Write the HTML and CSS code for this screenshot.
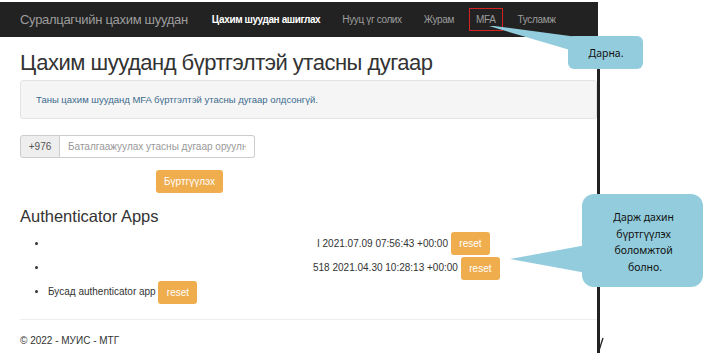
FILE: index.html
```html
<!DOCTYPE html>
<html lang="mn">
<head>
    <meta charset="UTF-8">
    <meta name="viewport" content="width=device-width, initial-scale=1.0">
    <title>MFA</title>
    <link rel="stylesheet" href="styles.css">
</head>
<body>
    <div class="navbar">
        <span class="brand">Суралцагчийн цахим шуудан</span>
        <a class="nav-link active">Цахим шуудан ашиглах</a>
        <a class="nav-link">Нууц үг солих</a>
        <a class="nav-link">Журам</a>
        <a class="nav-link marked">MFA</a>
        <a class="nav-link">Тусламж</a>
    </div>

    <div class="main">
        <h1>Цахим шууданд бүртгэлтэй утасны дугаар</h1>

        <div class="alert">Таны цахим шууданд MFA бүртгэлтэй утасны дугаар олдсонгүй.</div>

        <div class="input-group">
            <span class="addon">+976</span>
            <input type="text" class="phone" placeholder="Баталгаажуулах утасны дугаар оруулна уу">
        </div>

        <button class="btn register">Бүртгүүлэх</button>

        <h3>Authenticator Apps</h3>
        <ul class="apps">
            <li><span class="hidden-name first"></span><span class="app-info">I 2021.07.09 07:56:43 +00:00</span><button class="btn reset">reset</button></li>
            <li><span class="hidden-name second"></span><span class="app-info">518 2021.04.30 10:28:13 +00:00</span><button class="btn reset">reset</button></li>
            <li>Бусад authenticator app <button class="btn reset other">reset</button></li>
        </ul>

        <hr>
        <footer>&copy; 2022 - МУИС - МТГ</footer>
    </div>

    <!-- annotation layer -->
    <svg class="overlay" width="704" height="359" viewBox="0 0 704 359">
        <rect x="597" y="37" width="3" height="316" fill="#222"/>
        <line x1="598.5" y1="352" x2="603" y2="338" stroke="#222" stroke-width="1.3"/>

        <polygon points="489,26 494,26 600,40 570,50" fill="#93cddd"/>
        <rect x="568" y="36" width="75" height="33" rx="6" fill="#93cddd"/>
        <text x="606" y="57" class="note" text-anchor="middle">Дарна.</text>

        <polygon points="510,259 592,244 592,274" fill="#93cddd"/>
        <rect x="582" y="194" width="121" height="93" rx="12" fill="#93cddd"/>
        <text class="note" text-anchor="middle">
            <tspan x="645" y="221">Дарж дахин</tspan>
            <tspan x="645" y="237.5">бүртгүүлэх</tspan>
            <tspan x="645" y="254">боломжтой</tspan>
            <tspan x="645" y="270.5">болно.</tspan>
        </text>
    </svg>
</body>
</html>
```

FILE: styles.css
```css
body {
    margin: 0;
    padding-top: 2px;
    font-family: "Liberation Sans", Arial, sans-serif;
    font-size: 10px;
    color: #333;
    background: #fff;
    position: relative;
    width: 704px;
    height: 359px;
    overflow: hidden;
}
.navbar {
    width: 598px;
    height: 35px;
    background: #222;
    display: flex;
    align-items: center;
    white-space: nowrap;
}
.brand {
    color: #9d9d9d;
    font-size: 13px;
    letter-spacing: -0.3px;
    padding-left: 20px;
    flex-shrink: 0;
}
.nav-link {
    color: #9d9d9d;
    font-size: 10px;
    letter-spacing: -0.35px;
    margin-left: 22px;
    flex-shrink: 0;
}
.nav-link.active {
    color: #fff;
    font-weight: bold;
    letter-spacing: -0.4px;
    margin-left: 24px;
}
.nav-link.marked {
    outline: 1px solid #d42323;
    padding: 5px 6px;
    margin-left: 16px;
}
.nav-link.marked + .nav-link {
    margin-left: 16px;
}
.main {
    width: 577px;
    padding-left: 20px;
}
h1 {
    font-size: 22px;
    letter-spacing: -0.5px;
    font-weight: normal;
    line-height: 1.1;
    margin: 14px 0 5px;
    color: #333;
}
.alert {
    background: #f5f5f5;
    border: 1px solid #e3e3e3;
    border-radius: 3px;
    padding: 12px 15px;
    line-height: 13px;
    font-size: 9.5px;
    color: #3b6b8e;
}
.input-group {
    display: flex;
    width: 235px;
    height: 23px;
    margin-top: 16px;
}
.addon {
    width: 38px;
    background: #eee;
    border: 1px solid #ccc;
    border-radius: 3px 0 0 3px;
    color: #555;
    display: flex;
    align-items: center;
    justify-content: center;
}
.phone {
    flex: 1;
    min-width: 0;
    border: 1px solid #ccc;
    border-left: none;
    border-radius: 0 3px 3px 0;
    padding: 0 8px;
    font-family: inherit;
    font-size: 10px;
    color: #555;
}
.phone::placeholder {
    color: #999;
}
.btn {
    background: #f0ad4e;
    color: #fff;
    border: none;
    border-radius: 3px;
    font-family: inherit;
    font-size: 10px;
    cursor: pointer;
}
.register {
    display: block;
    margin: 12px 0 0 136px;
    width: 67px;
    height: 23px;
}
h3 {
    font-size: 16.5px;
    font-weight: normal;
    line-height: 1.1;
    margin: 14px 0 7px;
}
.apps {
    margin: 0;
    padding-left: 28px;
}
.apps li {
    height: 24px;
    line-height: 24px;
}
.hidden-name {
    display: inline-block;
}
.hidden-name.first {
    width: 269px;
}
.hidden-name.second {
    width: 265px;
}
.reset {
    width: 39px;
    height: 23px;
    margin-left: 3px;
    vertical-align: middle;
}
.reset.other {
    margin-left: 0;
}
.apps li:first-child .reset {
    vertical-align: top;
}
hr {
    border: none;
    border-top: 1px solid #eee;
    margin: 15px 0 0;
}
footer {
    padding-top: 15px;
    font-size: 10px;
}
.overlay {
    position: absolute;
    top: 0;
    left: 0;
    pointer-events: none;
}
.note {
    font-family: "Noto Sans", "Open Sans", sans-serif;
    font-size: 10.5px;
    fill: #111;
}
```
